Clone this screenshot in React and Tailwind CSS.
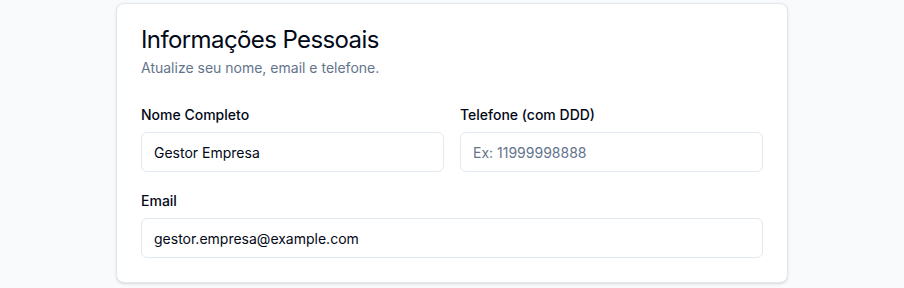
import React from "react";

const font = { fontFamily: "Inter, 'Noto Sans', sans-serif" };

function Field({ label, value, placeholder, className = "" }) {
  return (
    <div className={className}>
      <label className="block text-sm leading-5 font-medium text-[#020817]">{label}</label>
      <input
        readOnly
        defaultValue={value}
        placeholder={placeholder}
        className="mt-[7px] block w-full h-10 rounded-md border border-[#e2e8f0] bg-white px-3 text-sm text-[#020817] placeholder:text-[#64748b] outline-none"
        style={font}
      />
    </div>
  );
}

export default function App() {
  return (
    <div className="min-h-[288px] w-full bg-[#f9fafb] pt-[3px]" style={font}>
      <div className="mx-auto w-[672px] rounded-lg border border-[#e2e8f0] bg-white shadow-sm px-6 pt-6 pb-6">
        <h2 className="text-2xl leading-none font-normal tracking-tight text-[#020817]">Informações Pessoais</h2>
        <p className="mt-1.5 text-sm leading-5 text-[#64748b]">Atualize seu nome, email e telefone.</p>
        <div className="mt-[27px] grid grid-cols-2 gap-4">
          <Field label="Nome Completo" value="Gestor Empresa" />
          <Field label="Telefone (com DDD)" placeholder="Ex: 11999998888" />
        </div>
        <Field className="mt-[19px]" label="Email" value="gestor.empresa@example.com" />
      </div>
    </div>
  );
}
